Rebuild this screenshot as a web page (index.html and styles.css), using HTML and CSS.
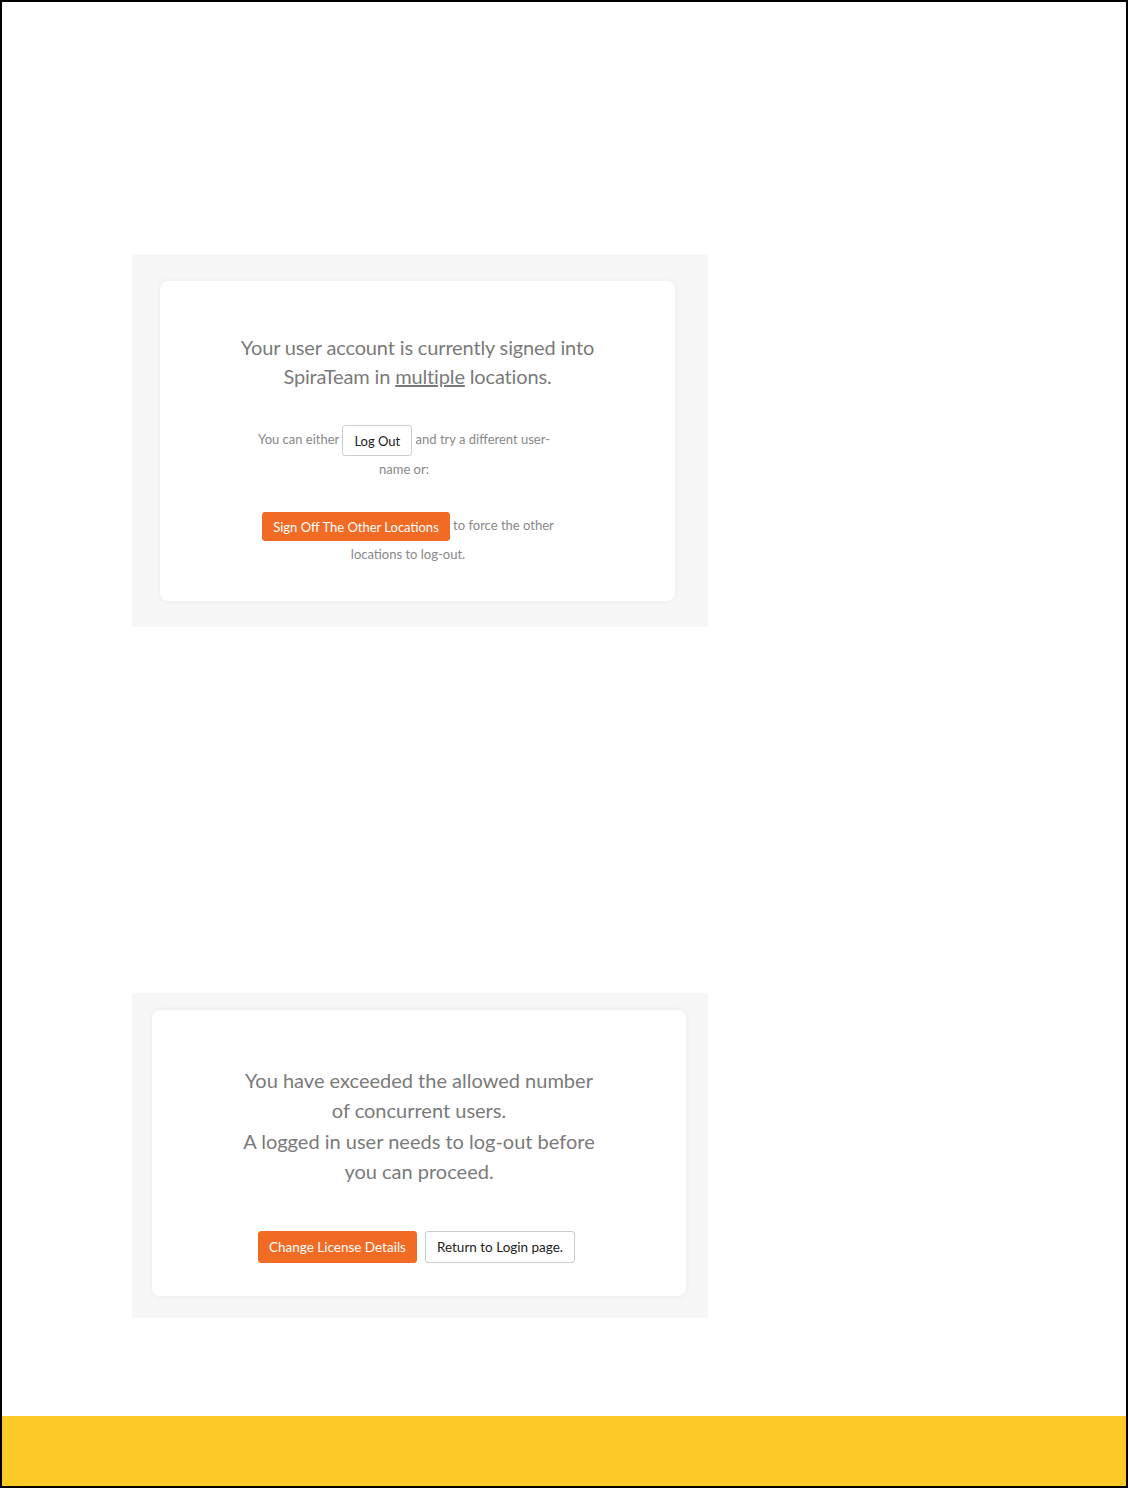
FILE: index.html
```html
<!DOCTYPE html>
<html lang="en">
<head>
  <meta charset="UTF-8">
  <title>SpiraTeam - Session</title>
  <link rel="stylesheet" href="styles.css">
</head>
<body>
  <div class="page">
    <div class="panel panel-sessions">
      <div class="card card-sessions">
        <h2 class="message">Your user account is currently signed into SpiraTeam in <u>multiple</u> locations.</h2>
        <div class="choices">
          <p>You can either <button class="btn btn-default">Log Out</button> and try a different user-name or:</p>
          <p class="sign-off"><button class="btn btn-primary">Sign Off The Other Locations</button> to force the other locations to log-out.</p>
        </div>
      </div>
    </div>

    <div class="panel panel-license">
      <div class="card card-license">
        <h2 class="message">You have exceeded the allowed number of concurrent users.<br>A logged in user needs to log-out before you can proceed.</h2>
        <div class="actions">
          <button class="btn btn-primary btn-large">Change License Details</button>
          <button class="btn btn-default btn-large">Return to Login page.</button>
        </div>
      </div>
    </div>

    <div class="footer"></div>
  </div>
</body>
</html>
```

FILE: styles.css
```css
body {
  margin: 0;
  font-family: Lato, "Open Sans", sans-serif;
  background-color: #fff;
}
.page {
  height: 1488px;
  box-sizing: border-box;
  border: 2px solid #000;
  display: flex;
  flex-direction: column;
}
.panel {
  width: 576px;
  margin-left: 130px;
  background-color: #f7f7f7;
  box-sizing: border-box;
}
.panel-sessions {
  margin-top: 252px;
  height: 373px;
  padding: 27px 0 0 28px;
}
.panel-license {
  margin-top: 366px;
  height: 325px;
  padding: 17px 0 0 20px;
}
.card {
  background-color: #fff;
  border-radius: 8px;
  box-shadow: 0 0 6px rgba(0,0,0,0.06);
  box-sizing: border-box;
  text-align: center;
}
.card-sessions {
  width: 515px;
  height: 320px;
  padding-top: 52px;
}
.card-license {
  width: 534px;
  height: 286px;
  padding-top: 55px;
}
.message {
  margin: 0 auto;
  font-size: 20px;
  font-weight: normal;
  color: #7a7a7a;
  line-height: 29px;
  width: 370px;
}
.card-sessions .message {
  letter-spacing: -0.15px;
}
.card-license .message {
  line-height: 30.3px;
}
.choices {
  width: 300px;
  margin: 34px auto 0;
  padding-right: 27px;
  font-size: 13px;
  color: #888;
  line-height: 27px;
}
.choices p {
  margin: 0 0 29px;
}
.choices .sign-off {
  padding-left: 8px;
}
.btn {
  font-family: Lato, "Open Sans", sans-serif;
  font-size: 13px;
  border-radius: 3px;
  vertical-align: middle;
  cursor: pointer;
}
.btn-default {
  background-color: #fff;
  border: 1px solid #ccc;
  color: #222;
}
.btn-primary {
  background-color: #f26b24;
  border: 1px solid #f26b24;
  color: #fff;
}
.choices .btn-default {
  height: 31px;
  padding: 0 11px;
}
.choices .btn-primary {
  height: 29px;
  padding: 0 10px;
}
.actions {
  margin-top: 45px;
  display: flex;
  justify-content: center;
  gap: 8px;
  padding-right: 5px;
}
.btn-large {
  height: 32px;
  padding: 0 10px;
  font-size: 13.5px;
}
.btn-large.btn-default {
  padding: 0 11px;
}
.footer {
  margin-top: auto;
  height: 70px;
  background-color: #fbca27;
}
```
